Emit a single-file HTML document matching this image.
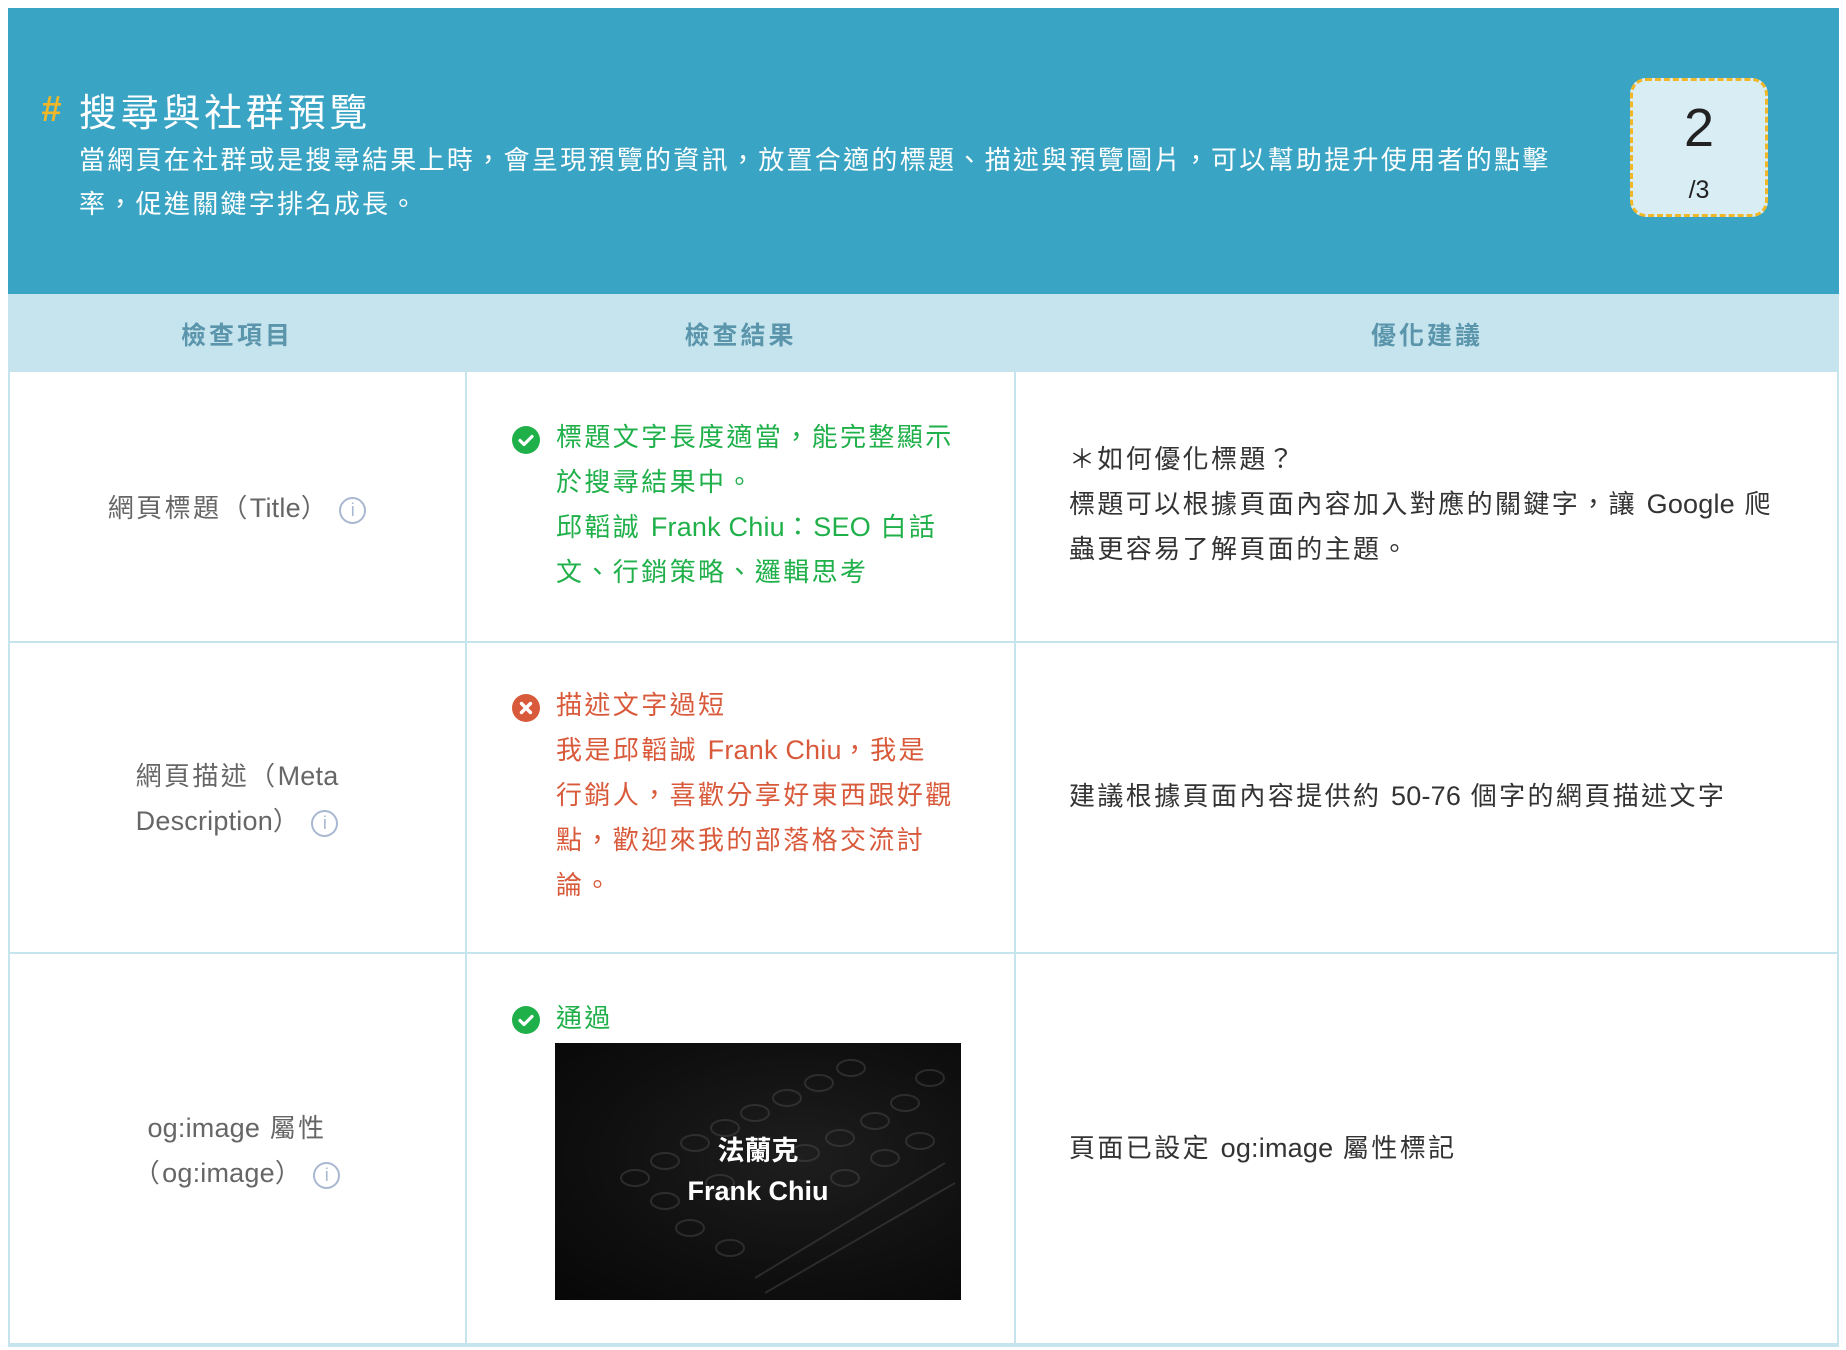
<!DOCTYPE html>
<html><head><meta charset="utf-8">
<style>
*{margin:0;padding:0;box-sizing:border-box}
body{width:1846px;height:1350px;background:#fff;font-family:"Liberation Sans","Noto Sans CJK TC",sans-serif;position:relative;overflow:hidden}
.a{position:absolute;white-space:nowrap}
.hdr{left:8px;top:8px;width:1831px;height:286px;background:#39a4c3}
.th{top:294px;height:78px;background:#c6e4ee}
.thd{font-size:25px;font-weight:bold;color:#5a95ab;letter-spacing:3px;top:316px;text-align:center}
.line{background:#c6e4ee}
.t{font-size:26px;letter-spacing:2.4px;line-height:45px}
.l{letter-spacing:0.2px;font-size:27px}
.g{color:#1fb04a}.r{color:#d95a3b}.k{color:#333}.gr{color:#666}
.info{display:inline-block;width:27px;height:27px;border:2px solid #a8b8d0;border-radius:50%;color:#a8b8d0;font-size:18px;line-height:23px;text-align:center;vertical-align:middle;margin-left:10px;letter-spacing:0;font-family:"Liberation Sans",sans-serif}
</style></head><body>
<div class="a hdr"></div>
<div class="a" style="left:41px;top:88px;font-size:36px;color:#f0b829;font-weight:bold;font-style:italic">#</div>
<div class="a" style="left:79px;top:82px;font-size:38px;color:#fff;letter-spacing:3.7px">搜尋與社群預覽</div>
<div class="a t" style="left:79px;top:138px;color:#fff;font-size:26px;letter-spacing:2.3px;line-height:44px">當網頁在社群或是搜尋結果上時，會呈現預覽的資訊，放置合適的標題、描述與預覽圖片，可以幫助提升使用者的點擊<br>率，促進關鍵字排名成長。</div>
<div class="a" style="left:1630px;top:78px;width:138px;height:139px;border:3px dashed #f0b829;border-radius:16px;background:#d8edf4;text-align:center;color:#222">
<div style="font-size:54px;margin-top:17px;line-height:60px">2</div>
<div style="font-size:25px;margin-top:18px">/3</div></div>

<div class="a th" style="left:8px;width:1831px"></div>
<div class="a thd" style="left:8px;width:458px">檢查項目</div>
<div class="a thd" style="left:466px;width:549px">檢查結果</div>
<div class="a thd" style="left:1015px;width:824px">優化建議</div>

<div class="a line" style="left:8px;top:294px;width:2px;height:1052px"></div>
<div class="a line" style="left:465px;top:294px;width:2px;height:1052px"></div>
<div class="a line" style="left:1014px;top:294px;width:2px;height:1052px"></div>
<div class="a line" style="left:1837px;top:294px;width:2px;height:1052px"></div>
<div class="a line" style="left:8px;top:641px;width:1831px;height:2px"></div>
<div class="a line" style="left:8px;top:952px;width:1831px;height:2px"></div>
<div class="a line" style="left:8px;top:1343px;width:1831px;height:4px"></div>

<!-- row1 -->
<div class="a t gr" style="left:8px;width:458px;text-align:center;top:486px">網頁標題（<span class="l">Title</span>）<span class="info">i</span></div>
<svg class="a" style="left:512px;top:426px" width="28" height="28"><circle cx="14" cy="14" r="14" fill="#1fb04a"/><path d="M8 14.5l4 4 8-8" stroke="#fff" stroke-width="3.2" fill="none" stroke-linecap="round" stroke-linejoin="round"/></svg>
<div class="a t g" style="left:556px;top:415px">標題文字長度適當，能完整顯示<br>於搜尋結果中。<br>邱韜誠 <span class="l">Frank Chiu</span>：<span class="l">SEO</span> 白話<br>文、行銷策略、邏輯思考</div>
<div class="a t k" style="left:1069px;top:437px">＊如何優化標題？<br>標題可以根據頁面內容加入對應的關鍵字，讓 <span class="l">Google</span> 爬<br>蟲更容易了解頁面的主題。</div>

<!-- row2 -->
<div class="a t gr" style="left:8px;width:458px;text-align:center;top:754px">網頁描述（<span class="l">Meta</span><br><span class="l">Description</span>）<span class="info">i</span></div>
<svg class="a" style="left:512px;top:694px" width="28" height="28"><circle cx="14" cy="14" r="14" fill="#d95a3b"/><path d="M9.5 9.5l9 9M18.5 9.5l-9 9" stroke="#fff" stroke-width="3.4" stroke-linecap="round"/></svg>
<div class="a t r" style="left:556px;top:683px">描述文字過短<br>我是邱韜誠 <span class="l">Frank Chiu</span>，我是<br>行銷人，喜歡分享好東西跟好觀<br>點，歡迎來我的部落格交流討<br>論。</div>
<div class="a t k" style="left:1069px;top:774px">建議根據頁面內容提供約 <span class="l">50-76</span> 個字的網頁描述文字</div>

<!-- row3 -->
<div class="a t gr" style="left:8px;width:458px;text-align:center;top:1106px"><span class="l">og:image</span> 屬性<br>（<span class="l">og:image</span>）<span class="info">i</span></div>
<svg class="a" style="left:512px;top:1006px" width="28" height="28"><circle cx="14" cy="14" r="14" fill="#1fb04a"/><path d="M8 14.5l4 4 8-8" stroke="#fff" stroke-width="3.2" fill="none" stroke-linecap="round" stroke-linejoin="round"/></svg>
<div class="a t g" style="left:556px;top:996px">通過</div>
<div class="a" style="left:555px;top:1043px;width:406px;height:257px;background:radial-gradient(ellipse at 60% 45%,#1e1e1e 0%,#101010 55%,#070707 100%);overflow:hidden">
<svg width="406" height="257" style="position:absolute;left:0;top:0;opacity:.4">
<g fill="none" stroke="#555" stroke-width="2">
<ellipse cx="80" cy="135" rx="14" ry="8"/><ellipse cx="110" cy="118" rx="14" ry="8"/><ellipse cx="140" cy="100" rx="14" ry="8"/><ellipse cx="170" cy="85" rx="14" ry="8"/><ellipse cx="200" cy="70" rx="14" ry="8"/><ellipse cx="232" cy="55" rx="14" ry="8"/><ellipse cx="264" cy="40" rx="14" ry="8"/><ellipse cx="296" cy="25" rx="14" ry="8"/>
<ellipse cx="110" cy="158" rx="14" ry="8"/><ellipse cx="165" cy="140" rx="14" ry="8"/><ellipse cx="250" cy="110" rx="14" ry="8"/><ellipse cx="285" cy="95" rx="14" ry="8"/><ellipse cx="320" cy="78" rx="14" ry="8"/><ellipse cx="350" cy="60" rx="14" ry="8"/><ellipse cx="375" cy="35" rx="14" ry="8"/>
<ellipse cx="135" cy="185" rx="14" ry="8"/><ellipse cx="175" cy="205" rx="14" ry="8"/><ellipse cx="290" cy="135" rx="14" ry="8"/><ellipse cx="330" cy="115" rx="14" ry="8"/><ellipse cx="365" cy="98" rx="14" ry="8"/>
<path d="M200 235L390 120M210 250L400 140"/></g></svg>
<div style="position:absolute;left:0;width:406px;top:88px;text-align:center;color:#fff;font-weight:bold;font-size:27px;line-height:40px">法蘭克<br>Frank Chiu</div>
</div>
<div class="a t k" style="left:1069px;top:1126px">頁面已設定 <span class="l">og:image</span> 屬性標記</div>
</body></html>
